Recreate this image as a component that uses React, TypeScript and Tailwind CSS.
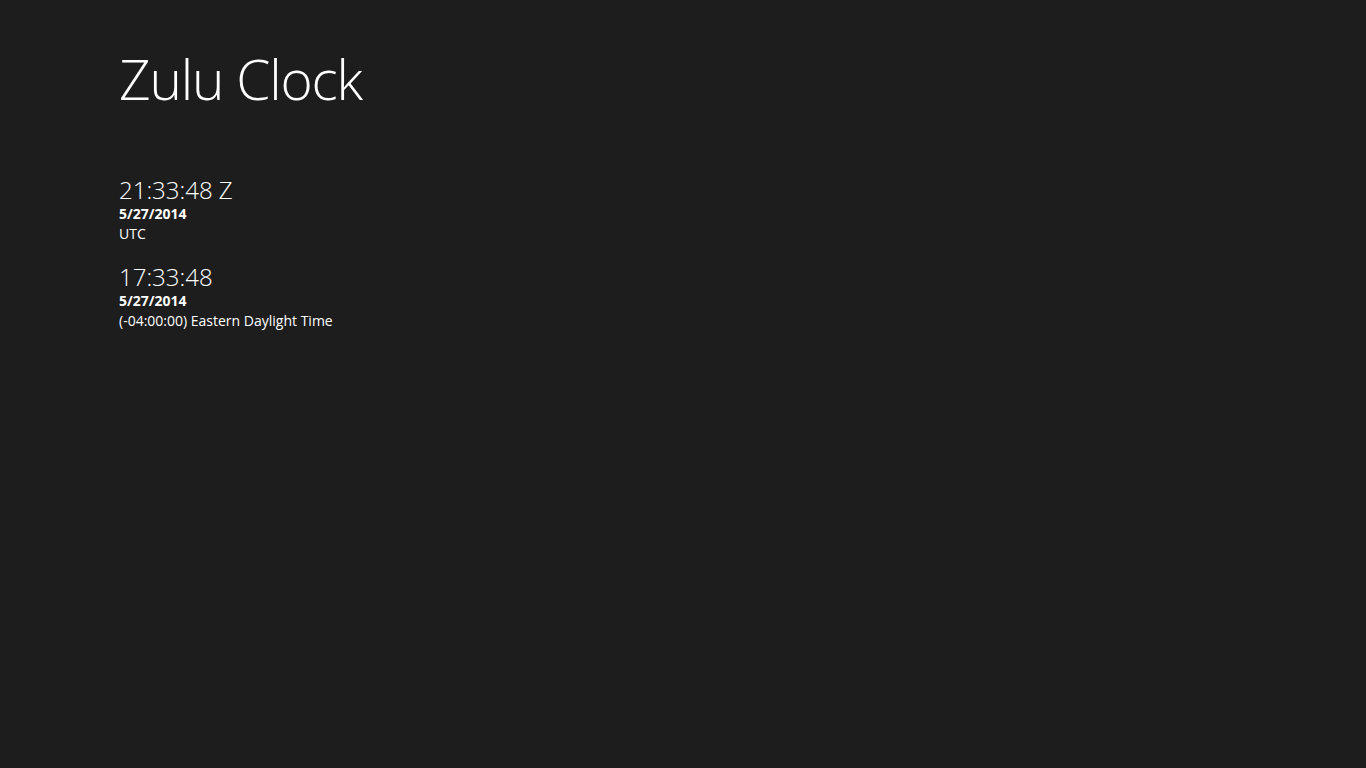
import React from 'react';

const clocks = [
  { time: '21:33:48 Z', date: '5/27/2014', zone: 'UTC' },
  { time: '17:33:48', date: '5/27/2014', zone: '(-04:00:00) Eastern Daylight Time' },
];

export default function App() {
  return (
    <div className="min-h-screen w-full bg-[#1d1d1d] text-white font-['Open_Sans','Noto_Sans',sans-serif]">
      <div className="pl-[119px] pt-[43px]">
        <h1 className="text-[55px] font-light leading-[72px] tracking-[-1.2px]">Zulu Clock</h1>

        <div className="mt-[61px] flex flex-col gap-[19px]">
          {clocks.map((c) => (
            <div key={c.time} className="flex flex-col">
              <div className="text-[24px] font-light leading-[28px]">{c.time}</div>
              <div className="text-[14px] font-bold leading-[20px]">{c.date}</div>
              <div className="text-[14px] leading-[20px]">{c.zone}</div>
            </div>
          ))}
        </div>
      </div>
    </div>
  );
}
